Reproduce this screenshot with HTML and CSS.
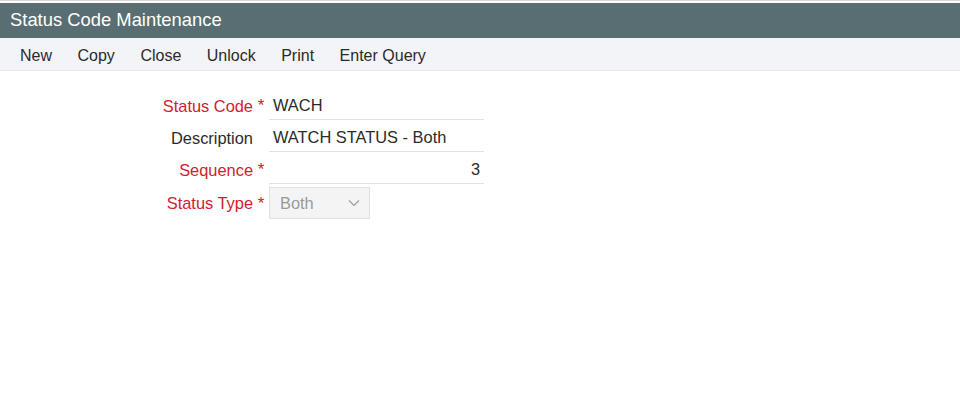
FILE: index.html
```html
<!DOCTYPE html>
<html lang="en">
<head>
    <meta charset="UTF-8">
    <title>Status Code Maintenance</title>
    <link rel="stylesheet" href="styles.css">
</head>
<body>
    <div class="window">
        <div class="titleBar">Status Code Maintenance</div>
        <div class="toolbar">
            <span class="toolItem">New</span>
            <span class="toolItem">Copy</span>
            <span class="toolItem">Close</span>
            <span class="toolItem">Unlock</span>
            <span class="toolItem">Print</span>
            <span class="toolItem">Enter Query</span>
        </div>
        <form class="statusForm">
            <label class="fieldLabel required" for="statusCode">Status Code</label>
            <span class="star">*</span>
            <input class="fieldInput" id="statusCode" type="text" value="WACH">

            <label class="fieldLabel" for="description">Description</label>
            <span class="star"></span>
            <input class="fieldInput" id="description" type="text" value="WATCH STATUS - Both">

            <label class="fieldLabel required" for="sequence">Sequence</label>
            <span class="star">*</span>
            <input class="fieldInput numberInput" id="sequence" type="text" value="3">

            <label class="fieldLabel required" for="statusType">Status Type</label>
            <span class="star">*</span>
            <div class="selectBox">
                <span class="selectValue">Both</span>
                <svg class="chevron" width="12" height="8" viewBox="0 0 12 8"><path d="M1 1.5 L6 6.5 L11 1.5" fill="none" stroke="#9a9a9a" stroke-width="1.1"/></svg>
            </div>
        </form>
    </div>
</body>
</html>
```

FILE: styles.css
```css
:root {
    --header-color: #586e72;
    --toolbar-color: #f3f4f7;
    --required-color: #d0202f;
    --text-color: #2b2b2b;
    --line-color: #e2e2e2;
}
body {
    margin: 0;
    font-family: 'Liberation Sans', Arial, sans-serif;
    font-size: 16px;
    color: var(--text-color);
    background: #ffffff;
}
.window {
    padding-top: 2px;
    border-top: 1px solid #d6d6d6;
}
.titleBar {
    background: var(--header-color);
    color: #ffffff;
    font-size: 18.4px;
    height: 35px;
    line-height: 33px;
    padding-left: 10px;
}
.toolbar {
    background: var(--toolbar-color);
    border-bottom: 1px solid #e6e6e6;
    height: 33px;
    box-sizing: border-box;
    padding-top: 3px;
    display: flex;
    align-items: center;
    gap: 25.5px;
    padding-left: 20px;
    font-size: 16px;
}
.toolItem {
    color: #2b2b2b;
}
.statusForm {
    display: grid;
    grid-template-columns: 253px 16px 215px;
    grid-template-rows: 32px 32px 32px 35px;
    margin-top: 17px;
    font-size: 16.4px;
}
.fieldLabel {
    text-align: right;
    align-self: center;
    padding-top: 4px;
    color: var(--text-color);
}
.fieldLabel.required {
    color: var(--required-color);
}
.star {
    color: var(--required-color);
    align-self: center;
    padding-top: 4px;
    text-align: center;
    font-size: 17px;
}
.fieldInput {
    border: none;
    border-bottom: 1px solid var(--line-color);
    box-sizing: border-box;
    height: 32px;
    font-family: inherit;
    font-size: 16.4px;
    color: var(--text-color);
    padding: 3px 4px 0 4px;
    outline: none;
    background: transparent;
}
.numberInput {
    text-align: right;
}
.selectBox {
    width: 101px;
    height: 32px;
    align-self: end;
    box-sizing: border-box;
    border: 1px solid #e0e0e0;
    background: #f4f4f4;
    display: flex;
    align-items: center;
    justify-content: space-between;
    padding: 0 9px 0 10px;
    color: #9a9a9a;
}
```
